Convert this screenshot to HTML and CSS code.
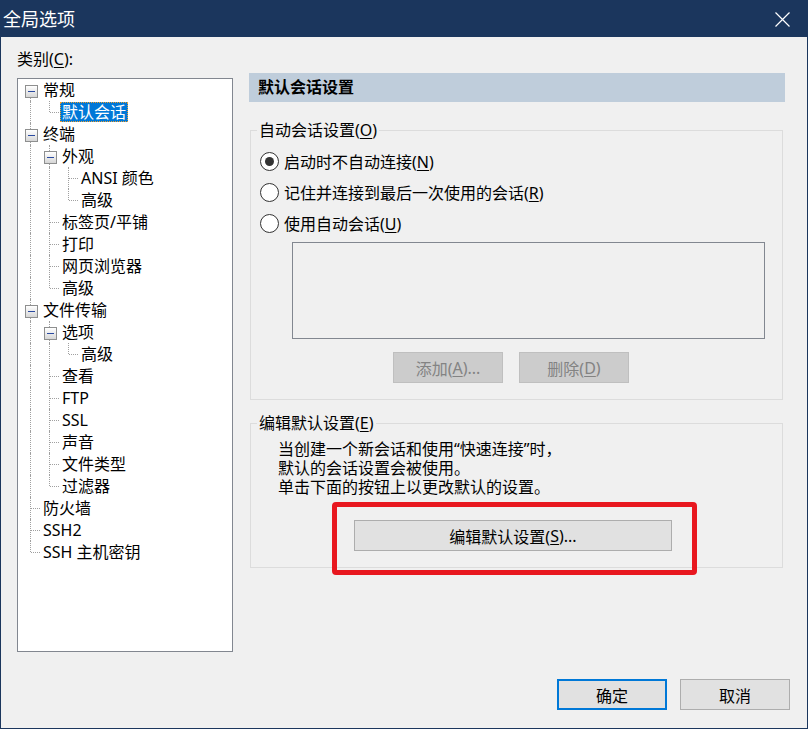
FILE: index.html
```html
<!DOCTYPE html>
<html lang="zh-CN">
<head>
<meta charset="utf-8">
<title>全局选项</title>
<link rel="stylesheet" href="styles.css">
</head>
<body>
<div class="win">
  <div class="titlebar">
    <span class="title">全局选项</span>
    <svg class="close" width="15" height="15" viewBox="0 0 15 15"><path d="M0.5 0.5 L14.5 14.5 M14.5 0.5 L0.5 14.5" stroke="#fff" stroke-width="1.2" fill="none"/></svg>
  </div>
  <div class="main">
    <div class="left">
      <div class="cat">类别(<u>C</u>):</div>
      <div class="tree">
        <div class="row"><span class="c bx first"></span><span class="lbl">常规</span></div>
        <div class="row"><span class="c v"></span><span class="c l"></span><span class="lbl sel">默认会话</span></div>
        <div class="row"><span class="c bx"></span><span class="lbl">终端</span></div>
        <div class="row"><span class="c v"></span><span class="c bx"></span><span class="lbl">外观</span></div>
        <div class="row"><span class="c v"></span><span class="c v"></span><span class="c t"></span><span class="lbl">ANSI 颜色</span></div>
        <div class="row"><span class="c v"></span><span class="c v"></span><span class="c l"></span><span class="lbl">高级</span></div>
        <div class="row"><span class="c v"></span><span class="c t"></span><span class="lbl">标签页/平铺</span></div>
        <div class="row"><span class="c v"></span><span class="c t"></span><span class="lbl">打印</span></div>
        <div class="row"><span class="c v"></span><span class="c t"></span><span class="lbl">网页浏览器</span></div>
        <div class="row"><span class="c v"></span><span class="c l"></span><span class="lbl">高级</span></div>
        <div class="row"><span class="c bx"></span><span class="lbl">文件传输</span></div>
        <div class="row"><span class="c v"></span><span class="c bx"></span><span class="lbl">选项</span></div>
        <div class="row"><span class="c v"></span><span class="c v"></span><span class="c l"></span><span class="lbl">高级</span></div>
        <div class="row"><span class="c v"></span><span class="c t"></span><span class="lbl">查看</span></div>
        <div class="row"><span class="c v"></span><span class="c t"></span><span class="lbl">FTP</span></div>
        <div class="row"><span class="c v"></span><span class="c t"></span><span class="lbl">SSL</span></div>
        <div class="row"><span class="c v"></span><span class="c t"></span><span class="lbl">声音</span></div>
        <div class="row"><span class="c v"></span><span class="c t"></span><span class="lbl">文件类型</span></div>
        <div class="row"><span class="c v"></span><span class="c l"></span><span class="lbl">过滤器</span></div>
        <div class="row"><span class="c t"></span><span class="lbl">防火墙</span></div>
        <div class="row"><span class="c t"></span><span class="lbl">SSH2</span></div>
        <div class="row"><span class="c l"></span><span class="lbl">SSH 主机密钥</span></div>
      </div>
    </div>
    <div class="right">
      <div class="header">默认会话设置</div>
      <fieldset class="group g1">
        <legend>自动会话设置(<u>O</u>)</legend>
        <div class="gi1">
          <div class="radio"><span class="rb on"></span><span>启动时不自动连接(<u>N</u>)</span></div>
          <div class="radio"><span class="rb"></span><span>记住并连接到最后一次使用的会话(<u>R</u>)</span></div>
          <div class="radio"><span class="rb"></span><span>使用自动会话(<u>U</u>)</span></div>
          <div class="listbox"></div>
          <div class="btnrow">
            <div class="btn dis">添加(<u>A</u>)...</div>
            <div class="btn dis">删除(<u>D</u>)</div>
          </div>
        </div>
      </fieldset>
      <fieldset class="group g2">
        <legend>编辑默认设置(<u>E</u>)</legend>
        <div class="gi2">
          <div class="desc">当创建一个新会话和使用“快速连接”时，<br>默认的会话设置会被使用。<br>单击下面的按钮上以更改默认的设置。</div>
          <div class="editwrap">
            <div class="btn edit">编辑默认设置(<u>S</u>)...</div>
            <div class="redmark"></div>
          </div>
        </div>
      </fieldset>
    </div>
  </div>
  <div class="foot">
    <div class="btn ok">确定</div>
    <div class="btn">取消</div>
  </div>
</div>
</body>
</html>
```
FILE: styles.css
```css
* { box-sizing: border-box; }
html, body { margin: 0; padding: 0; background: #f0f0f0; }
body {
  font-family: "Noto Sans", "Noto Sans CJK SC", sans-serif;
  font-size: 16px;
  color: #000;
}
u { text-decoration-thickness: 1px; text-underline-offset: 2px; }

.win {
  width: 808px;
  height: 729px;
  border: 1px solid #1b365d;
  background: #f0f0f0;
  display: flex;
  flex-direction: column;
}

.titlebar {
  height: 36px;
  background: #1b365d;
  display: flex;
  align-items: center;
  justify-content: space-between;
  padding: 0 17px 0 2px;
  color: #fff;
}
.title { font-size: 18px; line-height: 36px; }
.close { display: block; }

.main {
  display: flex;
  padding: 11px 0 0 16px;
}
.left { width: 216px; flex: none; }
.cat { line-height: 22px; height: 22px; }
.tree {
  margin-top: 8px;
  height: 574px;
  border: 1px solid #828790;
  background: #fff;
  padding: 0 0 0 3px;
}
.row {
  display: flex;
  align-items: center;
  height: 22px;
}
.c {
  flex: none;
  width: 19px;
  height: 22px;
  position: relative;
}
.v::before, .t::before, .bx::before {
  content: "";
  position: absolute;
  left: 9px;
  top: 0;
  bottom: 0;
  border-left: 1px dotted #a0a0a0;
}
.bx.first::before { top: 11px; }
.l::before {
  content: "";
  position: absolute;
  left: 9px;
  top: 0;
  height: 11px;
  border-left: 1px dotted #a0a0a0;
}
.t::after, .l::after {
  content: "";
  position: absolute;
  left: 10px;
  right: 0;
  top: 11px;
  border-top: 1px dotted #a0a0a0;
}
.bx::after {
  content: "";
  position: absolute;
  left: 4px;
  top: 6px;
  width: 11px;
  height: 11px;
  border: 1px solid #8e8f8f;
  background:
    linear-gradient(#2a4aa0, #2a4aa0) center / 7px 1px no-repeat,
    linear-gradient(#ffffff, #d6d6d6);
}
.lbl {
  height: 20px;
  line-height: 20px;
  padding: 0 2px;
  margin-left: 1px;
  white-space: nowrap;
}
.sel {
  background: #0078d7;
  color: #fff;
  outline: 1px dotted #f0a030;
  outline-offset: -1px;
}

.right {
  width: 536px;
  margin-left: 16px;
  flex: none;
  padding-top: 25px;
}
.header {
  height: 29px;
  line-height: 29px;
  background: #bfcddb;
  font-weight: bold;
  padding-left: 9px;
}

.group {
  border: 1px solid #dcdcdc;
  margin: 0 2px 0 1px;
  padding: 0;
  min-width: 0;
}
.group legend {
  margin-left: 6px;
  padding: 0 2px;
  line-height: 22px;
  height: 22px;
}
.g1 { margin-top: 17px; }
.g2 { margin-top: 12px; }

.gi1 { padding: 5px 16px 16px 9px; }
.radio {
  display: flex;
  align-items: center;
  gap: 5px;
  height: 31px;
  line-height: 22px;
}
.rb {
  width: 19px;
  height: 19px;
  border: 1px solid #333;
  border-radius: 50%;
  background: #fff;
  flex: none;
  display: flex;
  align-items: center;
  justify-content: center;
}
.rb.on::after {
  content: "";
  width: 9px;
  height: 9px;
  border-radius: 50%;
  background: #333;
}
.listbox {
  margin: 3px 1px 0 32px;
  height: 97px;
  border: 1px solid #828790;
  background: #f0f0f0;
}
.btnrow {
  display: flex;
  gap: 16px;
  margin-top: 13px;
  padding-left: 133px;
}

.btn {
  width: 110px;
  height: 31px;
  border: 1px solid #adadad;
  background: #e1e1e1;
  display: flex;
  align-items: center;
  justify-content: center;
  white-space: nowrap;
}
.btn.dis {
  background: #cccccc;
  border-color: #bfbfbf;
  color: #838383;
}
.btn.ok { border: 2px solid #0078d7; }

.gi2 { padding: 6px 0 16px 27px; }
.desc { line-height: 19px; }
.editwrap {
  position: relative;
  margin: 23px 0 0 76px;
  width: 318px;
}
.btn.edit { width: 318px; }
.redmark {
  position: absolute;
  left: -22px;
  top: -18px;
  right: -25px;
  bottom: -24px;
  border: 5px solid #e8171f;
  border-radius: 4px;
}

.foot {
  margin-top: auto;
  display: flex;
  justify-content: flex-end;
  gap: 13px;
  padding: 0 17px 18px 0;
}
```
